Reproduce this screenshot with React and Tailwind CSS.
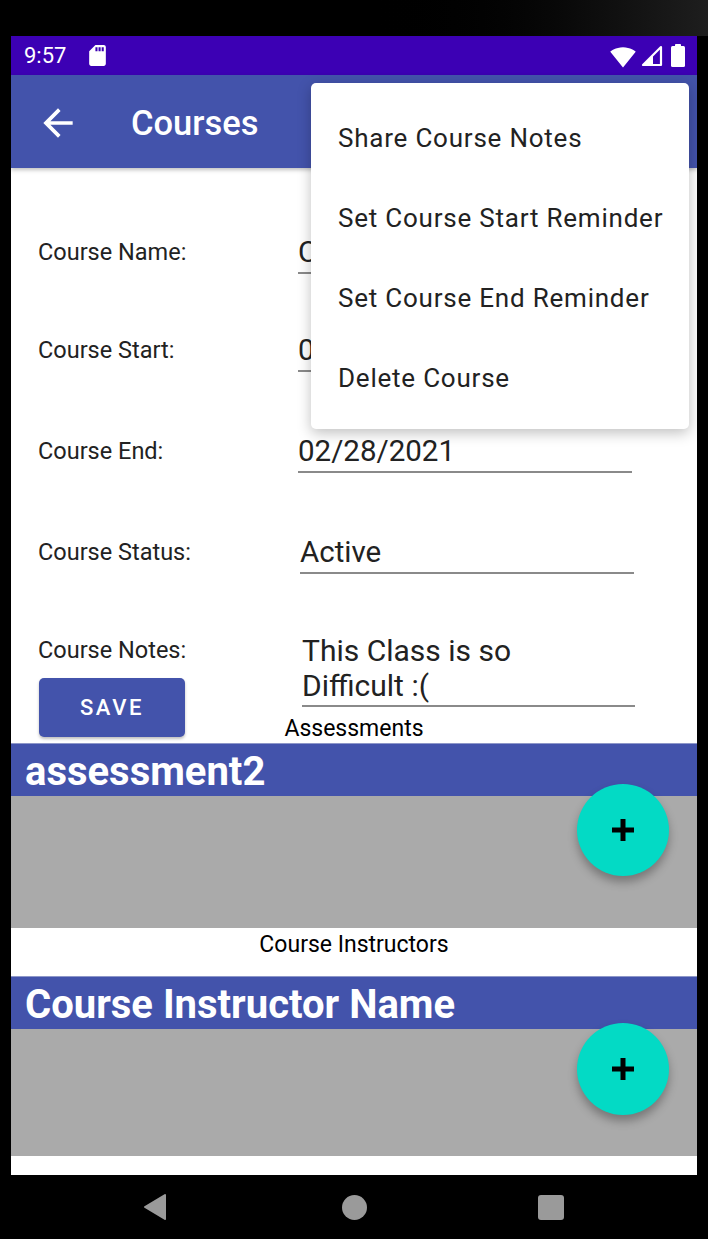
import React from "react";

const menuItems = [
  "Share Course Notes",
  "Set Course Start Reminder",
  "Set Course End Reminder",
  "Delete Course",
];

function PlusIcon() {
  return (
    <svg width="22" height="22" viewBox="0 0 22 22">
      <path d="M8.5 0h5v8.5H22v5h-8.5V22h-5v-8.5H0v-5h8.5z" fill="#000" />
    </svg>
  );
}

function StatusBar() {
  return (
    <div className="h-[39px] shrink-0 bg-[#3c00b4] flex items-center pl-[13px] pr-[12px] text-white">
      <span className="text-[22px] leading-none">9:57</span>
      {/* sd card */}
      <svg className="ml-[19px]" width="25" height="25" viewBox="0 0 24 24">
        <path
          d="M18 2h-8L4.02 8 4 20c0 1.1.9 2 2 2h12c1.1 0 2-.9 2-2V4c0-1.1-.9-2-2-2zm-6 6h-2V4h2v4zm3 0h-2V4h2v4zm3 0h-2V4h2v4z"
          fill="#fff"
        />
      </svg>
      <div className="ml-auto flex items-center gap-[4px]">
        {/* wifi */}
        <svg width="28" height="24" viewBox="0 0 24 22">
          <path
            d="M12.01 21.49L23.64 7c-.45-.34-4.93-4-11.64-4C5.28 3 .81 6.66.36 7l11.63 14.49.01.01.01-.01z"
            fill="#fff"
          />
        </svg>
        {/* signal */}
        <svg width="22" height="22" viewBox="0 0 22 22">
          <path d="M20 2L2 20h18z" fill="none" stroke="#fff" strokeWidth="2.2" strokeLinejoin="round" />
          <path d="M12 10L2 20h10z" fill="#fff" />
        </svg>
        {/* battery */}
        <svg className="ml-[4px]" width="14" height="23" viewBox="0 0 14 23">
          <rect x="4" y="0" width="6" height="3" rx="0.8" fill="#fff" />
          <rect x="0" y="2" width="14" height="21" rx="1.5" fill="#fff" />
        </svg>
      </div>
    </div>
  );
}

function AppBar() {
  return (
    <div className="h-[93px] shrink-0 bg-[#4353ab] flex items-center shadow-[0_2px_4px_rgba(0,0,0,0.25)] relative z-10">
      <svg className="ml-[25px] mt-[2px]" width="44" height="44" viewBox="0 0 24 24">
        <path d="M20 11H7.83l5.59-5.59L12 4l-8 8 8 8 1.41-1.41L7.83 13H20v-2z" fill="#fff" />
      </svg>
      <h1 className="ml-[51px] mt-[3px] text-[34.5px] font-medium text-white leading-none">Courses</h1>
    </div>
  );
}

function FieldRow({ label, value, mt, shift = "ml-0" }) {
  return (
    <div className={`flex items-start pl-[27px] ${mt}`}>
      <div className="w-[260px] text-[23.5px] leading-[34px] text-[#222]">{label}</div>
      <div
        className={`w-[334px] text-[29.5px] leading-[34px] text-[#222] pb-[3px] border-b-2 border-[#8a8a8a] whitespace-nowrap overflow-hidden ${shift}`}
      >
        {value}
      </div>
    </div>
  );
}

function ListSection({ title, grayHeight, fabTop }) {
  return (
    <div className="relative">
      <div className="h-[53px] bg-[#4353ab] border-t border-[#8e97c9] px-[14px] pt-[3px] flex items-center">
        <span className="text-[40px] font-bold text-white leading-none">{title}</span>
      </div>
      <div className={`bg-[#aaaaaa] ${grayHeight}`} />
      <button
        className={`absolute right-[28px] w-[92px] h-[92px] rounded-full bg-[#03dac5] flex items-center justify-center shadow-[0_6px_10px_rgba(0,0,0,0.3)] ${fabTop}`}
      >
        <PlusIcon />
      </button>
    </div>
  );
}

export default function App() {
  return (
    <div className="w-[708px] h-[1239px] bg-black flex flex-col overflow-hidden font-[Roboto,sans-serif]">
      <div className="h-[36px] shrink-0 bg-gradient-to-r from-black via-black to-[#1e1e1e]" />

      <div className="mx-[11px] flex-1 flex flex-col relative">
        <StatusBar />
        <AppBar />

        {/* Course detail form */}
        <div className="flex-1 bg-white flex flex-col">
          <FieldRow label="Course Name:" value="C" mt="mt-[67px]" />
          <FieldRow label="Course Start:" value="0" mt="mt-[59px]" />
          <FieldRow label="Course End:" value="02/28/2021" mt="mt-[62px]" />
          <FieldRow label="Course Status:" value="Active" mt="mt-[62px]" shift="ml-[2px]" />

          <div className="flex items-start pl-[27px] mt-[59px]">
            <div className="w-[260px] flex flex-col items-start">
              <span className="text-[23.5px] leading-[34px] text-[#222]">Course Notes:</span>
              <button className="mt-[11px] ml-[1px] w-[146px] h-[59px] rounded-[5px] bg-[#4353ab] text-white text-[22px] font-medium tracking-[0.12em] shadow-[0_2px_3px_rgba(0,0,0,0.25)]">
                SAVE
              </button>
            </div>
            <div className="ml-[4px] w-[333px] text-[30px] leading-[35px] text-[#222] pb-[2px] border-b-2 border-[#8a8a8a]">
              This Class is so
              <br />
              Difficult :(
            </div>
          </div>

          <div className="-mt-[19px] text-center text-[23px] leading-[22px] text-black">Assessments</div>

          <div className="mt-[3px]">
            <ListSection title="assessment2" grayHeight="h-[132px]" fabTop="top-[41px]" />
          </div>

          <div className="h-[48px] pt-[6px] text-center text-[23px] leading-[22px] text-black">
            Course Instructors
          </div>

          <ListSection title="Course Instructor Name" grayHeight="h-[127px]" fabTop="top-[47px]" />

          <div className="flex-1 bg-white" />
        </div>

        {/* Navigation bar */}
        <div className="h-[64px] shrink-0 bg-black flex items-center">
          <svg className="ml-[132px]" width="24" height="28" viewBox="0 0 24 28">
            <path d="M22 2L2 14l20 12z" fill="#9a9a9a" stroke="#9a9a9a" strokeWidth="2" strokeLinejoin="round" />
          </svg>
          <div className="ml-[175px] w-[25px] h-[25px] rounded-full bg-[#9a9a9a]" />
          <div className="ml-[171px] w-[26px] h-[25px] rounded-[3px] bg-[#9a9a9a]" />
        </div>

        {/* Overflow menu */}
        <div className="absolute left-[300px] top-[47px] w-[378px] pt-[14px] pb-[12px] bg-white rounded-[5px] shadow-[0_4px_14px_rgba(0,0,0,0.25)] z-20">
          {menuItems.map((item) => (
            <div key={item} className="h-[80px] flex items-center pl-[27px] pt-[2px] text-[26px] tracking-[0.03em] text-[#222]">
              {item}
            </div>
          ))}
        </div>
      </div>
    </div>
  );
}
